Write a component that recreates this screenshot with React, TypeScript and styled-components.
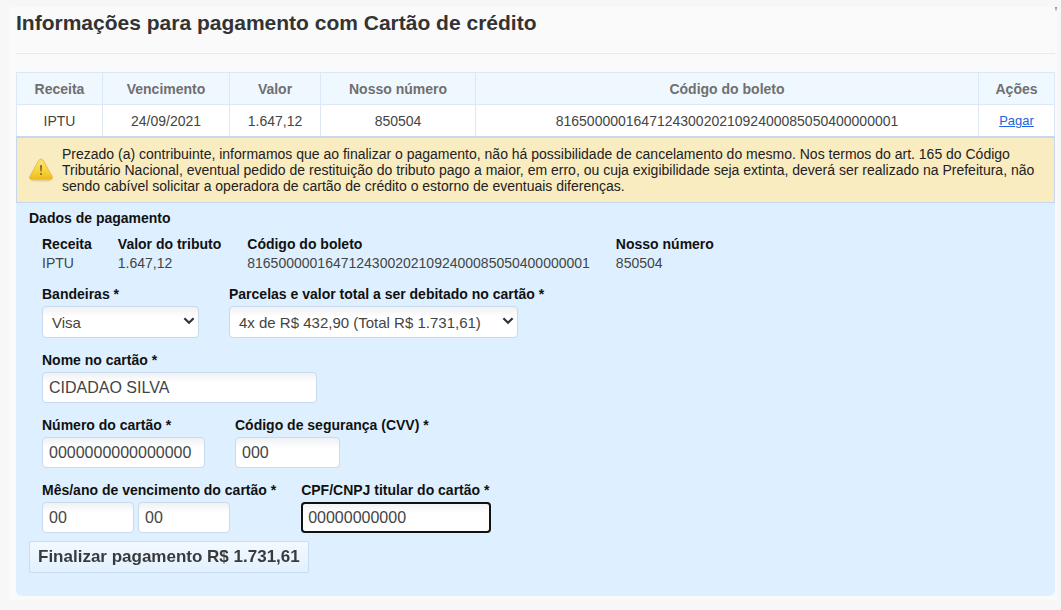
import React from "react";
import styled, { createGlobalStyle } from "styled-components";

const GlobalStyle = createGlobalStyle`
  *, *::before, *::after { box-sizing: border-box; }
  body {
    margin: 0;
    background: #f7f7f7;
    color: #444;
    font-family: "Liberation Sans", Arial, sans-serif;
    font-size: 14px;
    line-height: 16px;
  }
`;

const Page = styled.main`
  position: relative;
  margin: 7px 4px 10px 9px;
  padding: 0 2px 4px 7px;
  background: #fafafa;

  /* corner tick of the frame */
  &::after {
    content: "";
    position: absolute;
    top: 0;
    right: 0;
    width: 2px;
    height: 4px;
    background: linear-gradient(#8a8a8a, #e6e6e6);
  }
`;

const Title = styled.h1`
  margin: 0 0 18px;
  padding: 2px 0 16px;
  border-bottom: 1px solid #e2eaf4;
  color: #333;
  font-size: 21px;
  line-height: 28px;
`;

const BillTable = styled.table`
  width: 100%;
  border-collapse: collapse;
  table-layout: fixed;
  background: #fff;
`;

const Col = styled.col<{ $width?: number }>`
  width: ${(p) => (p.$width ? `${p.$width}px` : "auto")};
`;

const HeadCell = styled.th`
  height: 32px;
  padding: 0;
  border: 1px solid #dce8f5;
  background: #f0f8ff;
  color: #6f6f6f;
`;

const Cell = styled.td`
  height: 32px;
  padding: 0;
  border: 1px solid #dce8f5;
  text-align: center;
`;

const PayLink = styled.a`
  color: #1a66e0;
  font-size: 13px;
  text-decoration: underline;
`;

const Notice = styled.div`
  display: flex;
  align-items: center;
  gap: 9px;
  margin-top: -1px;
  padding: 8px 16px 8px 12px;
  border: 1px solid #c6d8ee;
  border-top-width: 2px;
  background: #f9ecc0;
  color: #222;

  svg { flex: none; }
  p { margin: 0; }
`;

const Payment = styled.form`
  padding: 7px 13px 23px;
  border-radius: 0 0 6px 6px;
  background: #def0ff;
`;

const SectionTitle = styled.h2`
  margin: 0 0 9px;
  color: #111;
  font-size: 14px;
  line-height: 16px;
`;

const Summary = styled.dl`
  display: flex;
  gap: 26px;
  margin: 0 0 13px 13px;
  line-height: 19px;

  dt { color: #111; font-weight: bold; }
  dd { margin: 0; }
`;

const Fields = styled.div`
  display: flex;
  flex-direction: column;
  gap: 14px;
  margin: 0 0 8px 13px;
`;

const FieldRow = styled.div<{ $gap?: number }>`
  display: flex;
  gap: ${(p) => p.$gap ?? 30}px;
`;

const Field = styled.div`
  display: flex;
  flex-direction: column;
  align-items: flex-start;
  gap: 4px;
`;

const Label = styled.label`
  color: #111;
  font-weight: bold;
  line-height: 16px;
`;

const Pair = styled.div`
  display: flex;
  gap: 4px;
`;

const controlStyle = `
  border: 1px solid #c9d9ee;
  border-radius: 4px;
  background: linear-gradient(#f0f1f4, #fff 10px);
  color: #444;
  font-family: inherit;
`;

const TextInput = styled.input<{ $width: number }>`
  ${controlStyle}
  width: ${(p) => p.$width}px;
  height: 31px;
  padding: 0 6px;
  font-size: 16px;

  &:focus { outline: 2px solid #111; outline-offset: -2px; }
`;

const SelectWrap = styled.div`
  position: relative;

  svg { position: absolute; right: 4px; top: 11px; pointer-events: none; }
`;

const Select = styled.select<{ $width: number }>`
  ${controlStyle}
  appearance: none;
  display: block;
  width: ${(p) => p.$width}px;
  height: 32px;
  padding: 0 9px;
  font-size: 15px;
`;

const Submit = styled.button`
  display: block;
  height: 32px;
  padding: 0 8px;
  border: 1px solid #cbdcee;
  border-radius: 2px;
  background: linear-gradient(#f3f9ff, #e1f1ff);
  color: #3a3a3a;
  font-family: inherit;
  font-size: 17px;
  font-weight: bold;
`;

const WarningIcon = () => (
  <svg width="24" height="24" viewBox="0 0 24 24" aria-hidden="true">
    <defs>
      <linearGradient id="warn" x1="0" y1="0" x2="0" y2="1">
        <stop offset="0" stopColor="#fae579" />
        <stop offset="0.55" stopColor="#f8d53c" />
        <stop offset="1" stopColor="#efb71e" />
      </linearGradient>
    </defs>
    <ellipse cx="12" cy="22.6" rx="10.5" ry="1.2" fill="#e2d5aa" />
    <path
      d="M9.6 2.4Q12-.6 14.4 2.4L23.3 18.8Q24 21.6 21.4 21.6H2.6Q0 21.6.7 18.8Z"
      fill="url(#warn)"
      stroke="#deb64c"
      strokeWidth="0.8"
    />
    <path d="M11 7.2H13L12.6 13.6H11.4Z" fill="#75642a" />
    <circle cx="12" cy="16" r="1" fill="#75642a" />
  </svg>
);

const Chevron = () => (
  <svg width="12" height="8" viewBox="0 0 12 8" aria-hidden="true">
    <path d="M1.4 1.2 6 5.8 10.6 1.2" fill="none" stroke="#333" strokeWidth="2.2" />
  </svg>
);

const boleto = "81650000016471243002021092400085050400000001";

export default function App() {
  return (
    <>
      <GlobalStyle />
      <Page>
        <Title>Informações para pagamento com Cartão de crédito</Title>
        <BillTable>
          <colgroup>
            <Col $width={86} />
            <Col $width={127} />
            <Col $width={91} />
            <Col $width={155} />
            <Col />
            <Col $width={76} />
          </colgroup>
          <thead>
            <tr>
              <HeadCell>Receita</HeadCell>
              <HeadCell>Vencimento</HeadCell>
              <HeadCell>Valor</HeadCell>
              <HeadCell>Nosso número</HeadCell>
              <HeadCell>Código do boleto</HeadCell>
              <HeadCell>Ações</HeadCell>
            </tr>
          </thead>
          <tbody>
            <tr>
              <Cell>IPTU</Cell>
              <Cell>24/09/2021</Cell>
              <Cell>1.647,12</Cell>
              <Cell>850504</Cell>
              <Cell>{boleto}</Cell>
              <Cell><PayLink href="#pagamento">Pagar</PayLink></Cell>
            </tr>
          </tbody>
        </BillTable>
        <Notice>
          <WarningIcon />
          <p>
            Prezado (a) contribuinte, informamos que ao finalizar o pagamento, não há possibilidade de
            cancelamento do mesmo. Nos termos do art. 165 do Código Tributário Nacional, eventual pedido de
            restituição do tributo pago a maior, em erro, ou cuja exigibilidade seja extinta, deverá ser
            realizado na Prefeitura, não sendo cabível solicitar a operadora de cartão de crédito o estorno de
            eventuais diferenças.
          </p>
        </Notice>
        <Payment id="pagamento" onSubmit={(e) => e.preventDefault()}>
          <SectionTitle>Dados de pagamento</SectionTitle>
          <Summary>
            <div><dt>Receita</dt><dd>IPTU</dd></div>
            <div><dt>Valor do tributo</dt><dd>1.647,12</dd></div>
            <div><dt>Código do boleto</dt><dd>{boleto}</dd></div>
            <div><dt>Nosso número</dt><dd>850504</dd></div>
          </Summary>
          <Fields>
            <FieldRow>
              <Field>
                <Label htmlFor="bandeira">Bandeiras *</Label>
                <SelectWrap>
                  <Select id="bandeira" $width={157} defaultValue="Visa">
                    <option>Visa</option>
                  </Select>
                  <Chevron />
                </SelectWrap>
              </Field>
              <Field>
                <Label htmlFor="parcelas">Parcelas e valor total a ser debitado no cartão *</Label>
                <SelectWrap>
                  <Select id="parcelas" $width={289}>
                    <option>4x de R$ 432,90 (Total R$ 1.731,61)</option>
                  </Select>
                  <Chevron />
                </SelectWrap>
              </Field>
            </FieldRow>
            <FieldRow>
              <Field>
                <Label htmlFor="nome">Nome no cartão *</Label>
                <TextInput id="nome" $width={275} defaultValue="CIDADAO SILVA" />
              </Field>
            </FieldRow>
            <FieldRow>
              <Field>
                <Label htmlFor="numero">Número do cartão *</Label>
                <TextInput id="numero" $width={163} defaultValue="0000000000000000" />
              </Field>
              <Field>
                <Label htmlFor="cvv">Código de segurança (CVV) *</Label>
                <TextInput id="cvv" $width={105} defaultValue="000" />
              </Field>
            </FieldRow>
            <FieldRow $gap={25}>
              <Field>
                <Label htmlFor="mes">Mês/ano de vencimento do cartão *</Label>
                <Pair>
                  <TextInput id="mes" $width={92} defaultValue="00" />
                  <TextInput aria-label="Ano de vencimento" $width={92} defaultValue="00" />
                </Pair>
              </Field>
              <Field>
                <Label htmlFor="cpf">CPF/CNPJ titular do cartão *</Label>
                <TextInput id="cpf" $width={190} defaultValue="00000000000" autoFocus />
              </Field>
            </FieldRow>
          </Fields>
          <Submit type="submit">Finalizar pagamento R$ 1.731,61</Submit>
        </Payment>
      </Page>
    </>
  );
}
